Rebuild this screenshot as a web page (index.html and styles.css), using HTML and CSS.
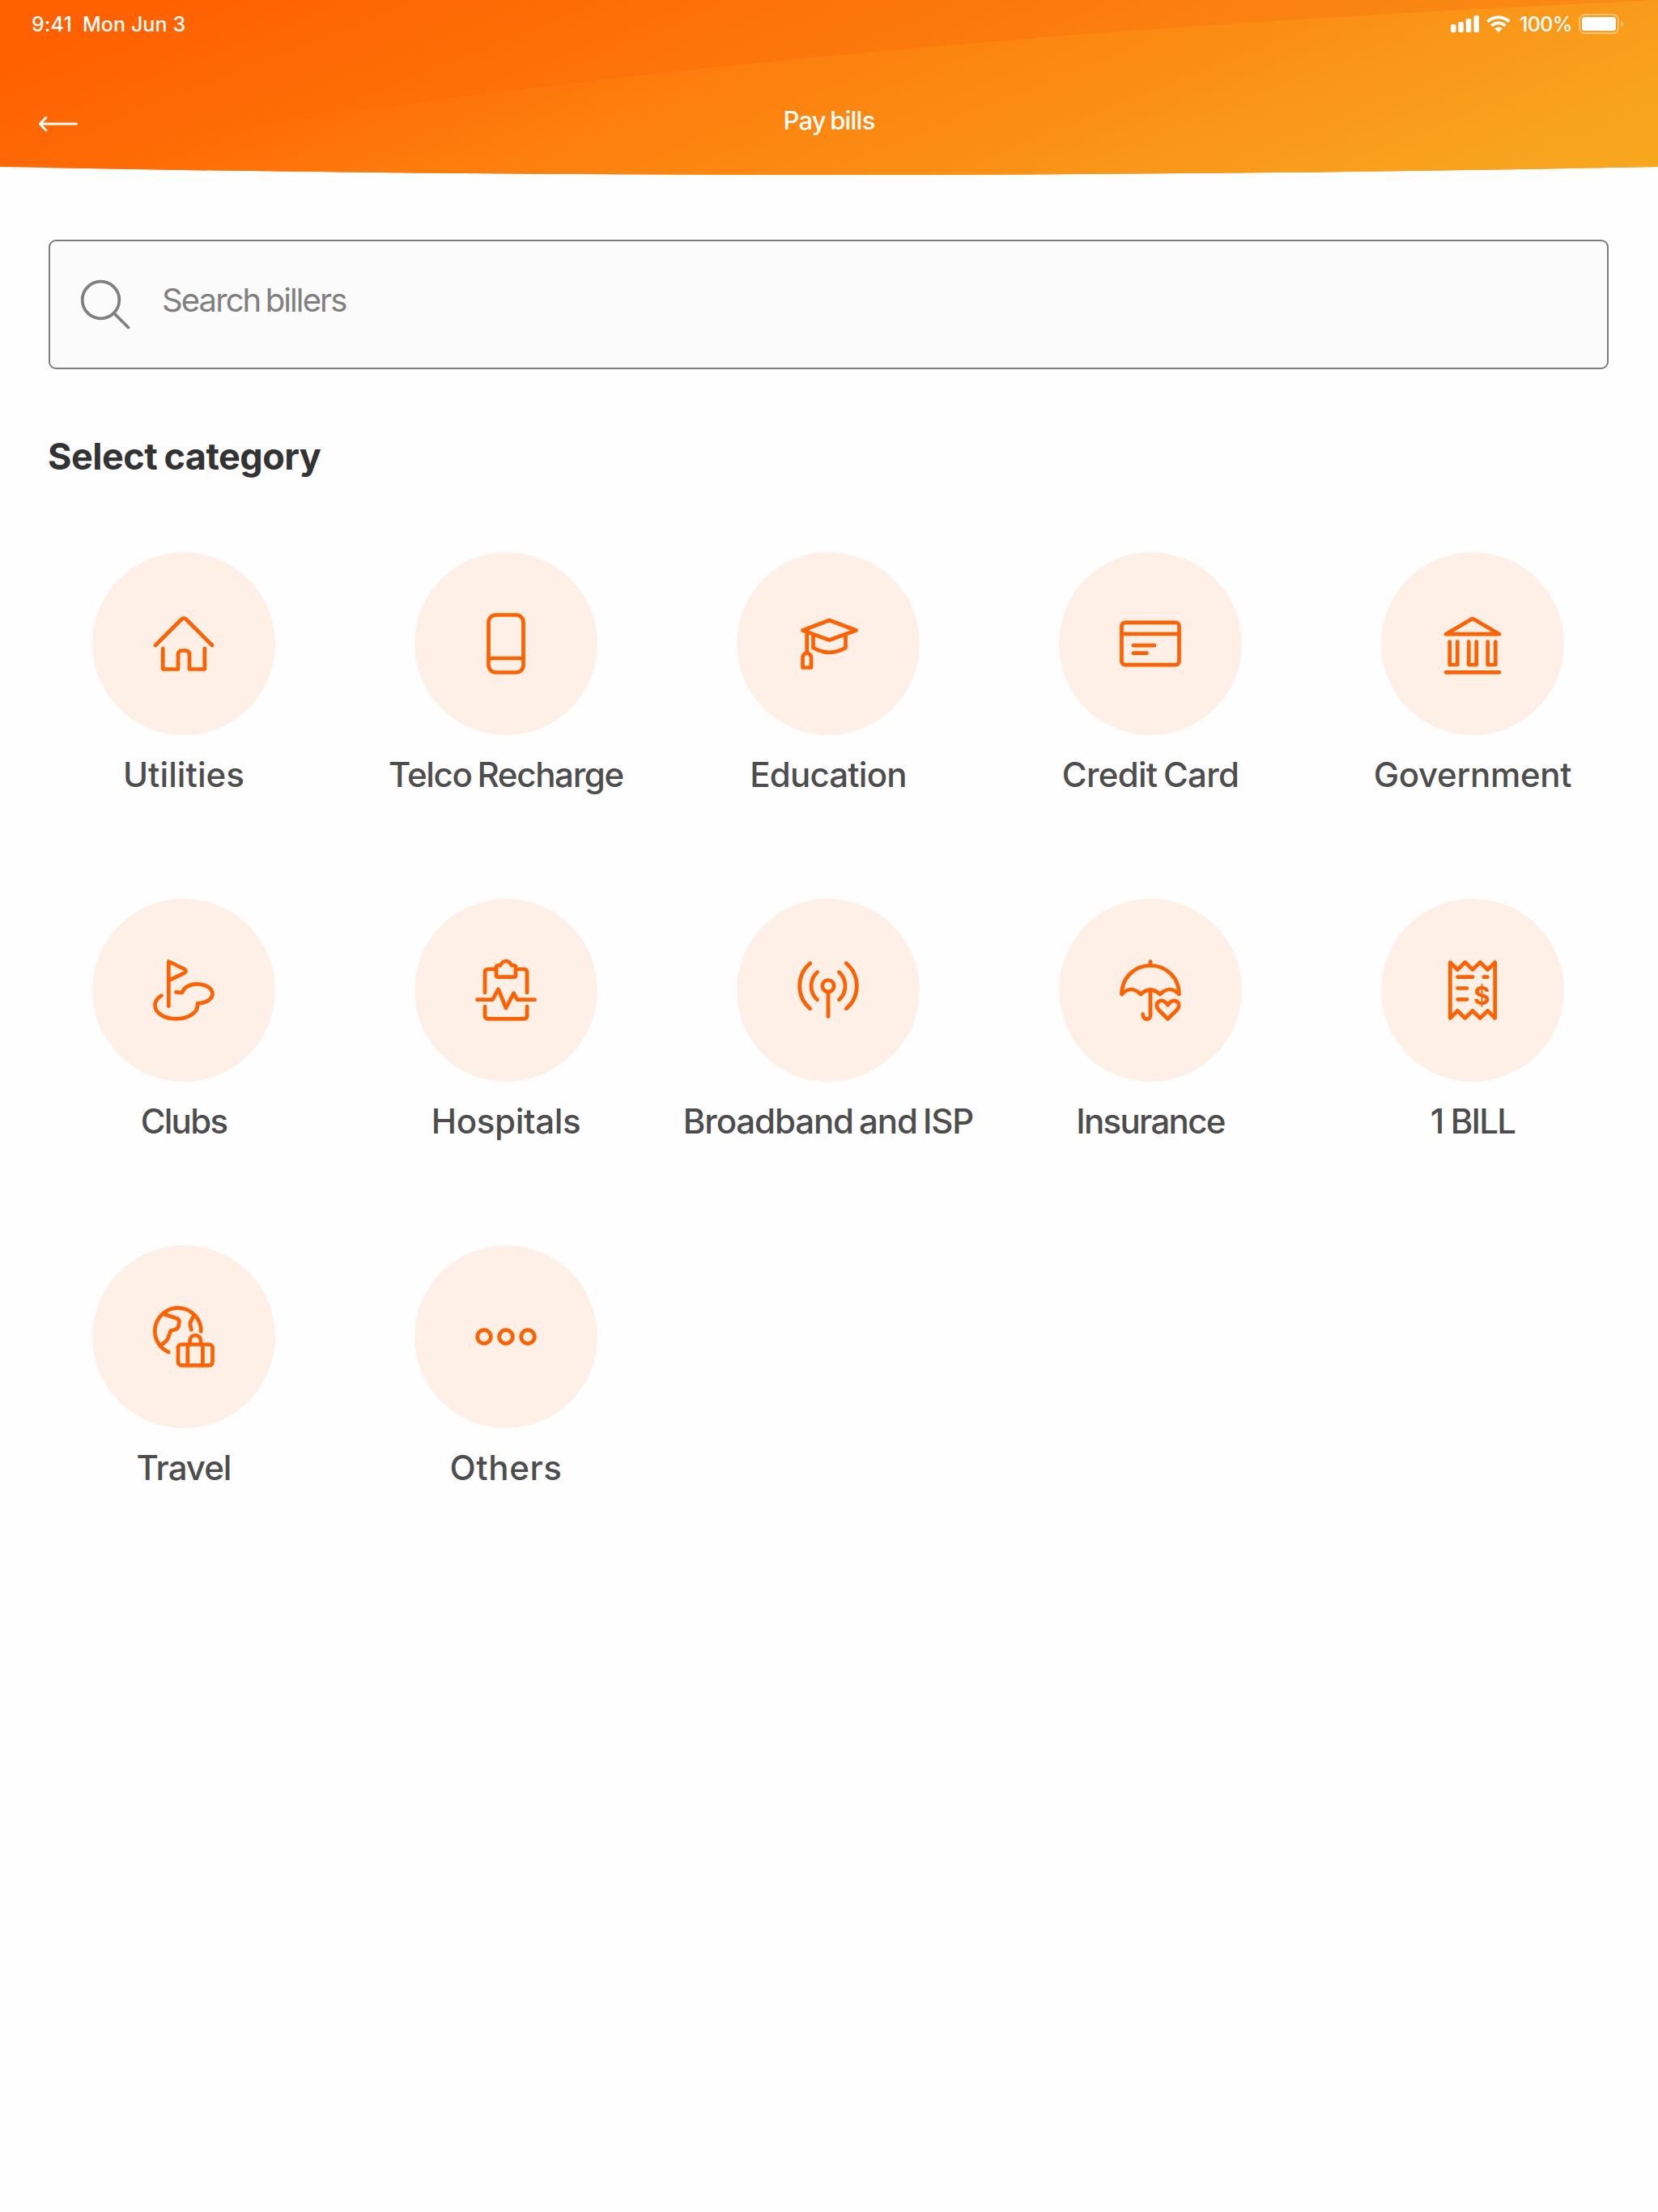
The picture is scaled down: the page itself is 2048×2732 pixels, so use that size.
FILE: index.html
```
<!DOCTYPE html>
<html lang="en">
<head>
    <meta charset="UTF-8">
    <title>Pay bills</title>
    <link rel="stylesheet" href="styles.css">
</head>
<body>
    <header class="header">
        <svg class="header-bg" viewBox="0 0 2048 216" preserveAspectRatio="none">
            <defs>
                <linearGradient id="base" gradientUnits="userSpaceOnUse" x1="0" y1="0" x2="283" y2="707">
                    <stop offset="0.08" stop-color="#ff6000"/>
                    <stop offset="1" stop-color="#f98c15"/>
                </linearGradient>
                <linearGradient id="wave" gradientUnits="userSpaceOnUse" x1="0" y1="0" x2="353" y2="884">
                    <stop offset="0.22" stop-color="#ff6803"/>
                    <stop offset="0.45" stop-color="#fd800e"/>
                    <stop offset="0.6" stop-color="#fb8a12"/>
                    <stop offset="0.82" stop-color="#f99d1b"/>
                    <stop offset="1" stop-color="#f7a81f"/>
                </linearGradient>
                <clipPath id="curve">
                    <path d="M0 0H2048V206Q1024 226 0 206Z"/>
                </clipPath>
            </defs>
            <g clip-path="url(#curve)">
                <rect width="2048" height="216" fill="url(#base)"/>
                <path d="M2048 0Q830 55 60 199V216H2048Z" fill="url(#wave)"/>
            </g>
        </svg>
        <div class="status-bar">
            <div class="status-left">
                <span class="time">9:41</span>
                <span class="date">Mon Jun 3</span>
            </div>
            <div class="status-right">
                <svg class="signal" width="36" height="22" viewBox="0 0 36 22" fill="#fff">
                    <rect x="0" y="11" width="6.5" height="10" rx="1.8"/>
                    <rect x="9.3" y="8" width="6.5" height="13" rx="1.8"/>
                    <rect x="18.8" y="4" width="6.5" height="17" rx="1.8"/>
                    <rect x="28.5" y="0" width="6.5" height="21" rx="1.8"/>
                </svg>
                <svg class="wifi" width="30" height="22" viewBox="0 0 30 22">
                    <g fill="none" stroke="#fff" stroke-width="3.8">
                        <path d="M1.6 7.8A19.3 19.3 0 0 1 28.4 7.8"/>
                        <path d="M6.4 12.8A12.4 12.4 0 0 1 23.6 12.8"/>
                    </g>
                    <path d="M15 21L10.2 16.3A7 7 0 0 1 19.8 16.3Z" fill="#fff"/>
                </svg>
                <span class="battery-text">100%</span>
                <svg class="battery" width="56" height="26" viewBox="0 0 56 26">
                    <rect x="1" y="1" width="48" height="23" rx="6.5" fill="none" stroke="#fff" stroke-width="2" opacity="0.4"/>
                    <rect x="4" y="4" width="42" height="17" rx="3.5" fill="#fff"/>
                    <path d="M52 9C56.5 10.5 56.5 15 52 16.5Z" fill="#fff" opacity="0.4"/>
                </svg>
            </div>
        </div>
        <div class="nav-bar">
            <svg class="back" width="50" height="20" viewBox="0 0 50 20">
                <path d="M47.5 10H2.5M10 2L2.3 10L10 18" fill="none" stroke="#fff" stroke-width="2.8" stroke-linecap="round" stroke-linejoin="round"/>
            </svg>
            <h1 class="title">Pay bills</h1>
        </div>
    </header>

    <main class="content">
        <div class="search">
            <svg class="search-icon" width="62" height="62" viewBox="0 0 62 62">
                <g fill="none" stroke="#7f7f7f" stroke-width="3.8" stroke-linecap="round">
                    <circle cx="25.5" cy="25.5" r="22.8"/>
                    <path d="M42 42L59.5 59.5"/>
                </g>
            </svg>
            <span class="placeholder">Search billers</span>
        </div>

        <h2 class="section-title">Select category</h2>

        <div class="categories">
            <div class="category">
                <div class="circle">
                    <svg class="icon" viewBox="-48 -48 96 96">
                        <path d="M-35 2L-3.5 -29.5Q0 -33.5 3.5 -29.5L35 2"/>
                        <path d="M-25.8 6V31.5H-7V14Q-7 8.5 -2 8.5H2Q7 8.5 7 14V31.5H25.8V6"/>
                    </svg>
                </div>
                <span class="label utilities">Utilities</span>
            </div>
            <div class="category">
                <div class="circle">
                    <svg class="icon" viewBox="-48 -48 96 96">
                        <rect x="-21.5" y="-35.5" width="43" height="71" rx="9"/>
                        <path d="M-21.5 18H21.5"/>
                    </svg>
                </div>
                <span class="label telco">Telco Recharge</span>
            </div>
            <div class="category">
                <div class="circle">
                    <svg class="icon" viewBox="-48 -48 96 96">
                        <path d="M1.5 -29L34.5 -16.5L1.5 -4.5L-31.5 -16.5Z"/>
                        <path d="M-18.5 -11V5Q1.5 16.5 21.5 5V-11"/>
                        <path d="M-26.3 -14V11"/>
                        <path d="M-31.5 29.5V18Q-31.5 12.5 -26.3 11.5Q-21 12.5 -21 18V29.5Z"/>
                    </svg>
                </div>
                <span class="label education">Education</span>
            </div>
            <div class="category">
                <div class="circle">
                    <svg class="icon" viewBox="-48 -48 96 96">
                        <rect x="-35.5" y="-26.2" width="71" height="52.4" rx="4.5"/>
                        <path d="M-35.5 -12H35.5M-21 2.2H5M-21 11.7H-4.5"/>
                    </svg>
                </div>
                <span class="label credit">Credit Card</span>
            </div>
            <div class="category">
                <div class="circle">
                    <svg class="icon" viewBox="-48 -48 96 96">
                        <path d="M-33 -11.8L-1.5 -30.3Q0 -31 1.5 -30.3L33 -11.8Z"/>
                        <path d="M-28.3 -2.5V26H-18.7V-2.5M-4.7 -2.5V26H4.7V-2.5M18.7 -2.5V26H28.3V-2.5"/>
                        <path d="M-33 35.3H33"/>
                    </svg>
                </div>
                <span class="label government">Government</span>
            </div>
            <div class="category">
                <div class="circle">
                    <svg class="icon" viewBox="-48 -48 96 96">
                        <path d="M-18.7 19.7V-35.5L1 -26Q4 -23.7 1 -21.3L-18.7 -12"/>
                        <path d="M-27.6 6.7C-32.5 9.5 -35.5 14 -35.5 18.7C-35.5 28 -24 35.3 -9.5 35.3C5 35.3 17 28 17 18.7V16.3C27.5 16.3 35.5 11 35.5 4.3C35.5 -2.5 27 -7.7 16.2 -7.7C7 -7.7 0 -3.2 -2 3L-9.5 2.3"/>
                    </svg>
                </div>
                <span class="label clubs">Clubs</span>
            </div>
            <div class="category">
                <div class="circle">
                    <svg class="icon" viewBox="-48 -48 96 96">
                        <path d="M-26 3V-22Q-26 -26 -22 -26H-12M26 3V-22Q26 -26 22 -26H12"/>
                        <path d="M-26 20V31.5Q-26 35.3 -22 35.3H22Q26 35.3 26 31.5V20"/>
                        <path d="M-12 -29Q-11.5 -30.7 -9 -30.7H-7Q-4 -36 0 -36Q4 -36 7 -30.7H9Q11.5 -30.7 12 -29V-18.5Q12 -16.3 9.5 -16.3H-9.5Q-12 -16.3 -12 -18.5Z"/>
                        <path d="M-35.5 11.7H-16.6L-9.5 -1.3L0 22L9.5 3.7L14 11.7H35.5"/>
                    </svg>
                </div>
                <span class="label hospitals">Hospitals</span>
            </div>
            <div class="category">
                <div class="circle">
                    <svg class="icon" viewBox="-48 -48 96 96">
                        <circle cx="0" cy="-5.3" r="7.2"/>
                        <path d="M0 2.5V32.5"/>
                        <path d="M-13.5 -22.3A23 23 0 0 0 -13.5 11.7M13.5 -22.3A23 23 0 0 1 13.5 11.7"/>
                        <path d="M-22.3 -33.3A36.6 36.6 0 0 0 -22.3 22.7M22.3 -33.3A36.6 36.6 0 0 1 22.3 22.7"/>
                    </svg>
                </div>
                <span class="label broadband">Broadband and ISP</span>
            </div>
            <div class="category">
                <div class="circle">
                    <svg class="icon" viewBox="-48 -48 96 96">
                        <path d="M0 -35.5V-30.5M-35.5 5C-35.5 -15 -20 -30.5 0 -30.5C20 -30.5 35.5 -15 35.5 5Q24 -7 12 5Q0 -6 -12 5Q-24 -7 -35.5 5Z"/>
                        <path d="M0 0V31C0 37.5 -9.3 37.5 -9.3 29.7"/>
                        <path d="M21.5 35.5L10 24C3 16 14 7 21.5 18.3C29 7 40 16 33 24Z"/>
                    </svg>
                </div>
                <span class="label insurance">Insurance</span>
            </div>
            <div class="category">
                <div class="circle">
                    <svg class="icon" viewBox="-48 -48 96 96">
                        <path d="M-27.7 -34.5L-18.7 -25.3L-9.3 -34.5L0 -25.3L9.3 -34.5L18.7 -25.3L27.7 -34.5V34.5L18.7 25.3L9.3 34.5L0 25.3L-9.3 34.5L-18.7 25.3L-27.7 34.5Z"/>
                        <path d="M-18.5 -16.3H0M13.8 -16.3H18.3M-18.5 -2.5H-7M-18.5 11.3H-7"/>
                        <text class="dollar" x="11.5" y="18.4">$</text>
                    </svg>
                </div>
                <span class="label bill">1 BILL</span>
            </div>
            <div class="category">
                <div class="circle">
                    <svg class="icon" viewBox="-48 -48 96 96">
                        <path d="M21.3 -6.5A28.5 28.5 0 1 0 -18.7 19"/>
                        <path d="M-24.5 -28L-9 -22.8Q-5.5 -21.5 -5.5 -18.5L-6.5 -13Q-7.5 -10 -10.5 -9L-16.3 -7.3L-20 3Q-22 6 -27 9.5"/>
                        <path d="M12.5 -26.5L8.2 -18Q7.5 -16 8 -14L9.5 -8.7"/>
                        <rect x="-7" y="9.5" width="42.5" height="25.8" rx="4"/>
                        <path d="M4.8 9.5V35.3M23.4 9.5V35.3M7.5 9.5V5C7.5 -4 21 -4 21 5V9.5"/>
                    </svg>
                </div>
                <span class="label travel">Travel</span>
            </div>
            <div class="category">
                <div class="circle">
                    <svg class="icon" viewBox="-48 -48 96 96">
                        <circle cx="-27" cy="0" r="8.3"/>
                        <circle cx="0" cy="0" r="8.3"/>
                        <circle cx="27" cy="0" r="8.3"/>
                    </svg>
                </div>
                <span class="label others">Others</span>
            </div>
        </div>
    </main>
</body>
</html>
```
FILE: styles.css
```
* {
    box-sizing: border-box;
}

body {
    margin: 0;
    min-height: 100vh;
    background-color: #fefefe;
    font-family: Inter, "Open Sans", sans-serif;
}

/* Header */
.header {
    position: relative;
    height: 216px;
    color: #fff;
}

.header-bg {
    position: absolute;
    top: 0;
    left: 0;
    width: 100%;
    height: 216px;
}

.status-bar {
    position: relative;
    display: flex;
    justify-content: space-between;
    height: 60px;
    padding: 0 42px 0 39px;
    font-size: 25px;
    font-weight: 500;
    line-height: 58px;
}

.status-left,
.status-right {
    display: flex;
    align-items: center;
}

.status-left {
    gap: 13px;
    letter-spacing: 0.1px;
}

.wifi {
    margin-left: 8px;
}

.battery-text {
    margin-left: 11px;
    letter-spacing: -0.6px;
}

.battery {
    margin-left: 8px;
}

.nav-bar {
    position: relative;
    display: flex;
    align-items: center;
    height: 80px;
    margin-top: 53px;
    padding: 0 47px;
}

.title {
    flex: 1;
    margin: 0 50px 10px 0;
    font-size: 31px;
    font-weight: 500;
    letter-spacing: -0.8px;
    word-spacing: -2px;
    text-align: center;
}

/* Search */
.content {
    padding: 80px 61px 0 60px;
}

.search {
    display: flex;
    align-items: center;
    height: 160px;
    padding-left: 37px;
    background-color: #fbfbfb;
    border: 2px solid #7d7d7d;
    border-radius: 9px;
}

.placeholder {
    margin: 0 0 12px 39px;
    color: #7f7f7f;
    font-size: 40px;
    letter-spacing: -1.9px;
    word-spacing: -3px;
}

.section-title {
    height: 60px;
    margin: 78px 0 88px -1px;
    color: #333;
    font-size: 45px;
    font-weight: 700;
    line-height: 60px;
    letter-spacing: -0.5px;
    word-spacing: -2px;
}

/* Category grid */
.categories {
    display: grid;
    grid-template-columns: repeat(5, 1fr);
    grid-auto-rows: 428px;
    margin: 0 -31px 0 -32px;
}

.category {
    display: flex;
    flex-direction: column;
    align-items: center;
}

.circle {
    display: flex;
    align-items: center;
    justify-content: center;
    width: 226px;
    height: 226px;
    background-color: #fff0e7;
    border-radius: 50%;
}

.icon {
    width: 96px;
    height: 96px;
    fill: none;
    stroke: #ff6000;
    stroke-width: 4.7;
    stroke-linecap: round;
    stroke-linejoin: round;
}

.dollar {
    fill: #ff6000;
    stroke: none;
    font-size: 31px;
    font-weight: 700;
    text-anchor: middle;
}

.label {
    margin-top: 24px;
    color: #4d4d4d;
    font-size: 42px;
    font-weight: 500;
    line-height: 50px;
    letter-spacing: -1px;
    word-spacing: -3px;
    white-space: nowrap;
}

/* Optical tracking per label */
.utilities {
    letter-spacing: 0.1px;
}

.telco {
    letter-spacing: -1.3px;
}

.education {
    letter-spacing: -0.8px;
}

.credit {
    letter-spacing: -0.7px;
}

.government,
.hospitals {
    letter-spacing: -0.3px;
}

.broadband {
    letter-spacing: -1.1px;
}

.clubs,
.insurance {
    letter-spacing: -1.7px;
}

.bill {
    letter-spacing: -1.8px;
    word-spacing: 0;
}

.others {
    letter-spacing: 0.6px;
}
```
